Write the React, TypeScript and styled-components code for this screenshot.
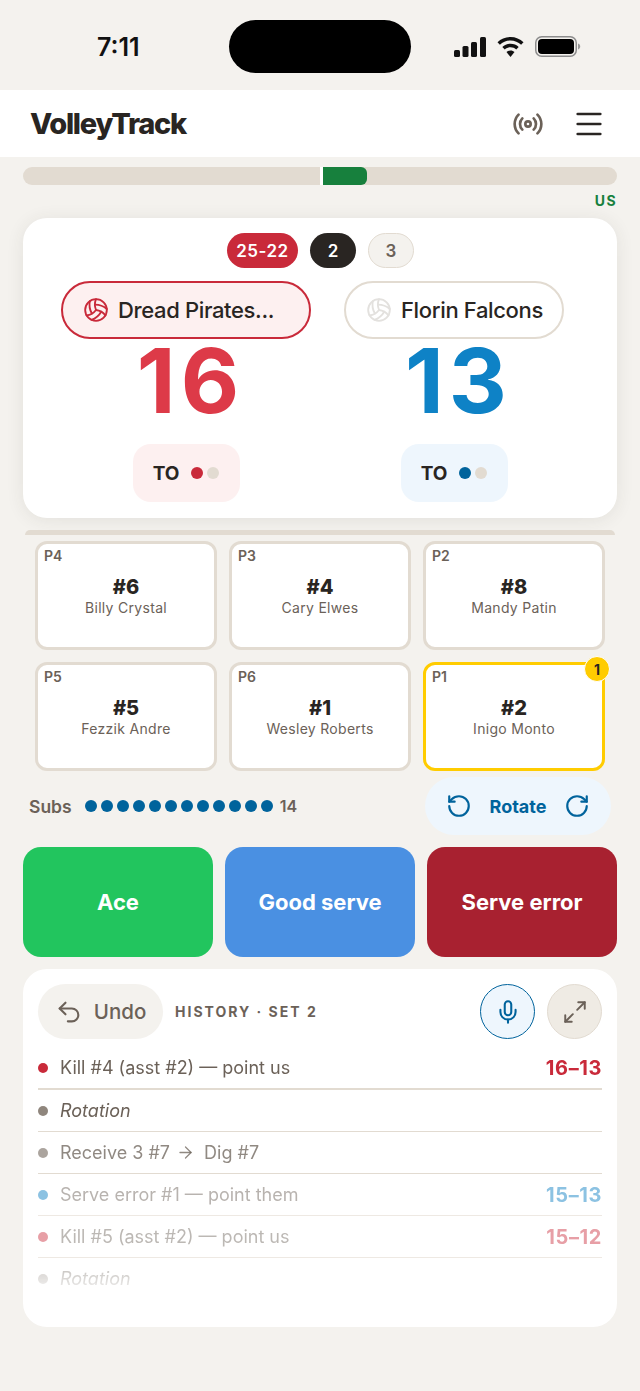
import React from 'react';
import { default as styled, createGlobalStyle } from 'styled-components';
import { Radio, Menu, Volleyball, RotateCcw, RotateCw, Undo2, Mic, Maximize2, ArrowRight } from 'lucide-react';

const colors = {
  page: '#f4f2ee',
  line: '#e2dbd1',
  ink: '#292522',
  muted: '#6b6158',
  red: '#c92a3a',
  redSoft: '#fdf0f0',
  blue: '#00639c',
  blueSoft: '#eef6fd',
  green: '#17803d',
};

const GlobalStyle = createGlobalStyle`
  html, body {
    margin: 0;
    padding: 0;
    background: ${colors.page};
  }
  body {
    font-family: Inter, "Liberation Sans", sans-serif;
    color: ${colors.ink};
  }
  * {
    box-sizing: border-box;
  }
`;

const Page = styled.div`
  width: 640px;
  height: 1391px;
  overflow: hidden;
  background: ${colors.page};
`;

const StatusBar = styled.div`
  height: 90px;
  display: flex;
  align-items: center;
  padding: 0 59px 0 97px;
`;

const Time = styled.div`
  width: 132px;
  font-size: 25px;
  font-weight: 600;
  color: #111;
  margin-top: 4px;
`;

const Island = styled.div`
  width: 182px;
  height: 53px;
  border-radius: 27px;
  background: #000;
  margin-top: 3px;
`;

const StatusIcons = styled.div`
  margin-left: 43px;
  display: flex;
  align-items: center;
  gap: 11px;
  margin-top: 3px;
`;

const Header = styled.header`
  height: 67px;
  background: #fff;
  display: flex;
  align-items: center;
  justify-content: space-between;
  padding: 0 34px 0 30px;
`;

const Logo = styled.div`
  font-size: 29px;
  font-weight: 800;
  letter-spacing: -1.25px;
  color: ${colors.ink};
`;

const HeaderActions = styled.div`
  display: flex;
  align-items: center;
  gap: 28px;
  color: ${colors.muted};
`;

const MenuButton = styled.div`
  display: flex;
  color: ${colors.ink};
`;

const Momentum = styled.div`
  margin: 10px 23px 0;
  height: 18px;
  border-radius: 9px;
  background: ${colors.line};
  display: flex;
  padding-left: 297px;
`;

const MomentumFill = styled.div`
  width: 47px;
  height: 18px;
  background: ${colors.green};
  border-left: 3px solid #fff;
  border-radius: 0 6px 6px 0;
`;

const MomentumLabel = styled.div`
  margin: 7px 23px 0 0;
  text-align: right;
  font-size: 14px;
  line-height: 17px;
  font-weight: 700;
  letter-spacing: 1.4px;
  color: ${colors.green};
`;

const ScoreCard = styled.section`
  margin: 9px 23px 0;
  height: 300px;
  background: #fff;
  border-radius: 24px;
  padding: 15px 29px 0;
  box-shadow: 0 2px 18px rgba(60, 50, 40, 0.09);
`;

const SetRow = styled.div`
  display: flex;
  justify-content: center;
  gap: 12px;
  padding-left: 1px;
`;

const SetPill = styled.div<{ $kind: 'won' | 'current' | 'next' }>`
  height: 35px;
  min-width: 46px;
  padding: 0 9.5px;
  border-radius: 18px;
  display: flex;
  align-items: center;
  justify-content: center;
  font-size: 17px;
  font-weight: 600;
  letter-spacing: 0.5px;
  color: ${(p) => (p.$kind === 'next' ? colors.muted : '#fff')};
  background: ${(p) =>
    p.$kind === 'won' ? colors.red : p.$kind === 'current' ? colors.ink : colors.page};
  border: ${(p) => (p.$kind === 'next' ? `1.5px solid ${colors.line}` : 'none')};
`;

const Teams = styled.div`
  margin-top: 13px;
  display: grid;
  grid-template-columns: 1fr 1fr;
`;

const TeamColumn = styled.div`
  display: flex;
  flex-direction: column;
  align-items: center;
`;

const TeamPill = styled.div<{ $serving?: boolean }>`
  width: ${(p) => (p.$serving ? '250px' : '220px')};
  height: 58px;
  border-radius: 29px;
  padding-left: 20px;
  display: flex;
  align-items: center;
  gap: 9px;
  font-size: 22px;
  font-weight: 500;
  letter-spacing: -0.35px;
  color: ${colors.ink};
  background: ${(p) => (p.$serving ? colors.redSoft : '#fff')};
  border: 2.5px solid ${(p) => (p.$serving ? colors.red : colors.line)};
`;

const Score = styled.div<{ $color: string }>`
  font-size: 90px;
  line-height: 84px;
  font-weight: 700;
  letter-spacing: 5px;
  text-indent: 9px;
  color: ${(p) => p.$color};
`;

const Timeouts = styled.div<{ $soft: string }>`
  margin-top: 21px;
  width: 107px;
  height: 58px;
  border-radius: 18px;
  background: ${(p) => p.$soft};
  display: flex;
  align-items: center;
  justify-content: center;
  gap: 4px;
  font-size: 19px;
  font-weight: 700;
  color: ${colors.ink};
`;

const TimeoutLabel = styled.span`
  margin-right: 8px;
`;

const TimeoutDot = styled.span<{ $color: string }>`
  width: 12px;
  height: 12px;
  border-radius: 50%;
  background: ${(p) => p.$color};
`;

const Court = styled.section`
  margin: 12px 25px 0;
  padding: 6px 10px 0;
  border-top: 5px solid ${colors.line};
  border-radius: 5px 5px 0 0;
  display: grid;
  grid-template-columns: repeat(3, 182px);
  grid-auto-rows: 109px;
  gap: 12px;
`;

const PlayerCard = styled.div<{ $server?: boolean }>`
  position: relative;
  background: #fff;
  border: 3px solid ${(p) => (p.$server ? '#ffcc00' : colors.line)};
  border-radius: 12px;
  padding: 3px 6px 0;
  display: flex;
  flex-direction: column;
`;

const Position = styled.div`
  font-size: 14px;
  line-height: 17px;
  font-weight: 600;
  color: ${colors.muted};
`;

const Jersey = styled.div`
  margin-top: 11px;
  text-align: center;
  font-size: 20px;
  line-height: 24px;
  font-weight: 800;
  color: ${colors.ink};
`;

const PlayerName = styled.div`
  text-align: center;
  font-size: 14px;
  line-height: 18px;
  letter-spacing: 0.3px;
  color: ${colors.muted};
`;

const ServeBadge = styled.div`
  position: absolute;
  top: -9px;
  right: -8px;
  width: 26px;
  height: 26px;
  border-radius: 50%;
  border: 1.5px solid #fff;
  background: #ffcc00;
  display: flex;
  align-items: center;
  justify-content: center;
  font-size: 14px;
  font-weight: 700;
  color: ${colors.ink};
`;

const SubsRow = styled.div`
  margin: 6px 29px 0;
  display: flex;
  align-items: center;
  height: 58px;
`;

const SubsLabel = styled.div`
  font-size: 17.5px;
  font-weight: 600;
  color: ${colors.muted};
  margin-right: 13px;
`;

const SubDots = styled.div`
  display: flex;
  gap: 4px;
`;

const SubDot = styled.span`
  width: 12px;
  height: 12px;
  border-radius: 50%;
  background: ${colors.blue};
`;

const SubCount = styled.div`
  margin-left: 7px;
  font-size: 16px;
  font-weight: 600;
  color: ${colors.muted};
`;

const RotatePill = styled.div`
  margin-left: auto;
  width: 186px;
  height: 58px;
  border-radius: 29px;
  background: ${colors.blueSoft};
  color: ${colors.blue};
  display: flex;
  align-items: center;
  justify-content: space-between;
  padding: 0 21px;
  font-size: 18px;
  font-weight: 700;
`;

const Actions = styled.div`
  margin: 12px 23px 0;
  display: grid;
  grid-template-columns: repeat(3, 190px);
  gap: 12px;
`;

const ActionButton = styled.div<{ $bg: string }>`
  height: 110px;
  border-radius: 18px;
  background: ${(p) => p.$bg};
  color: #fff;
  font-size: 22px;
  font-weight: 700;
  display: flex;
  align-items: center;
  justify-content: center;
`;

const HistoryCard = styled.section`
  margin: 12px 23px 0;
  height: 358px;
  background: #fff;
  border-radius: 24px;
  padding: 15px 15px 0;
`;

const HistoryTop = styled.div`
  display: flex;
  align-items: center;
`;

const UndoButton = styled.div`
  width: 125px;
  height: 55px;
  border-radius: 28px;
  background: ${colors.page};
  color: ${colors.muted};
  display: flex;
  align-items: center;
  justify-content: center;
  gap: 11px;
  font-size: 20.5px;
  font-weight: 500;
`;

const HistoryTitle = styled.div`
  margin-left: 12px;
  font-size: 14px;
  font-weight: 700;
  letter-spacing: 2px;
  color: ${colors.muted};
`;

const RoundButton = styled.div<{ $active?: boolean }>`
  width: 55px;
  height: 55px;
  border-radius: 50%;
  display: flex;
  align-items: center;
  justify-content: center;
  margin-left: 12px;
  color: ${(p) => (p.$active ? colors.blue : colors.muted)};
  background: ${(p) => (p.$active ? colors.blueSoft : '#efebe4')};
  border: 1.5px solid ${(p) => (p.$active ? colors.blue : colors.line)};
`;

const RoundButtons = styled.div`
  margin-left: auto;
  display: flex;
`;

const HistoryList = styled.div`
  margin-top: 8px;
  mask-image: linear-gradient(#000 215px, transparent 252px);
`;

const HistoryRow = styled.div<{ $fade: number; $strong?: boolean; $last?: boolean }>`
  height: ${(p) => (p.$strong ? '43px' : '42px')};
  display: flex;
  align-items: center;
  border-bottom: ${(p) => (p.$strong ? 2 : 1)}px solid
    rgba(226, 219, 209, ${(p) => (p.$last ? 0 : p.$fade < 0.6 ? 0.6 : 1)});
  font-size: 18px;
  color: rgba(107, 97, 88, ${(p) => p.$fade});
`;

const RowDot = styled.span<{ $color: string; $fade: number }>`
  width: 10px;
  height: 10px;
  border-radius: 50%;
  margin-right: 12px;
  background: ${(p) => p.$color};
  opacity: ${(p) => p.$fade};
`;

const RowText = styled.span<{ $italic?: boolean }>`
  font-style: ${(p) => (p.$italic ? 'italic' : 'normal')};
`;

const RowArrow = styled.span`
  display: flex;
  margin: 0 9px 0 6px;
`;

const RowScore = styled.span<{ $color: string; $fade: number }>`
  margin-left: auto;
  font-size: 20px;
  font-weight: 700;
  letter-spacing: 0.6px;
  color: ${(p) => p.$color};
  opacity: ${(p) => p.$fade};
`;

const SignalIcon = () => (
  <svg width="32" height="20" viewBox="0 0 32 20" fill="#111">
    <rect x="0" y="13" width="6" height="7" rx="1.5" />
    <rect x="8.5" y="9" width="6" height="11" rx="1.5" />
    <rect x="17" y="5" width="6" height="15" rx="1.5" />
    <rect x="26" y="0" width="6" height="20" rx="1.5" />
  </svg>
);

const WifiIcon = () => (
  <svg width="27" height="20" viewBox="0 0 27 20" fill="#111">
    <path d="M13.5 0C8.4 0 3.9 2 .5 5.2l2.4 2.6C5.7 5.2 9.4 3.6 13.5 3.6s7.8 1.6 10.6 4.2l2.4-2.6C23.1 2 18.6 0 13.5 0z" />
    <path d="M13.5 6.7c-3.2 0-6.1 1.2-8.2 3.2l2.5 2.6c1.5-1.4 3.5-2.2 5.7-2.2s4.2.8 5.7 2.2l2.5-2.6c-2.1-2-5-3.2-8.2-3.2z" />
    <path d="M13.5 13.4c-1.6 0-3 .6-4 1.6l4 5 4-5c-1-1-2.4-1.6-4-1.6z" />
  </svg>
);

const BatteryIcon = () => (
  <svg width="46" height="21" viewBox="0 0 46 21">
    <rect x="0.75" y="0.75" width="40.5" height="19.5" rx="6" fill="none" stroke="#8c8c8c" strokeWidth="1.5" />
    <rect x="3" y="3" width="36" height="15" rx="4" fill="#000" />
    <path d="M43 7.5c1.4.4 2.2 1.6 2.2 3s-.8 2.6-2.2 3z" fill="#9a9a9a" />
  </svg>
);

const players = [
  { pos: 'P4', num: '#6', name: 'Billy Crystal' },
  { pos: 'P3', num: '#4', name: 'Cary Elwes' },
  { pos: 'P2', num: '#8', name: 'Mandy Patin' },
  { pos: 'P5', num: '#5', name: 'Fezzik Andre' },
  { pos: 'P6', num: '#1', name: 'Wesley Roberts' },
  { pos: 'P1', num: '#2', name: 'Inigo Monto', server: true },
];

const history = [
  { text: 'Kill #4 (asst #2) — point us', dot: '#c92a3a', score: '16–13', scoreColor: '#c92a3a', fade: 1, strong: true },
  { text: 'Rotation', dot: '#8f867d', italic: true, fade: 1 },
  { text: 'Receive 3 #7', then: 'Dig #7', dot: '#8f867d', fade: 0.75 },
  { text: 'Serve error #1 — point them', dot: '#0f7fc2', score: '15–13', scoreColor: '#0f7fc2', fade: 0.48 },
  { text: 'Kill #5 (asst #2) — point us', dot: '#c92a3a', score: '15–12', scoreColor: '#c92a3a', fade: 0.45 },
  { text: 'Rotation', dot: '#8f867d', italic: true, fade: 0.45, last: true },
];

export default function App() {
  return (
    <Page>
      <GlobalStyle />
      <StatusBar>
        <Time>7:11</Time>
        <Island />
        <StatusIcons>
          <SignalIcon />
          <WifiIcon />
          <BatteryIcon />
        </StatusIcons>
      </StatusBar>
      <Header>
        <Logo>VolleyTrack</Logo>
        <HeaderActions>
          <Radio size={32} strokeWidth={2} />
          <MenuButton>
            <Menu size={34} strokeWidth={1.8} />
          </MenuButton>
        </HeaderActions>
      </Header>
      <Momentum>
        <MomentumFill />
      </Momentum>
      <MomentumLabel>US</MomentumLabel>
      <ScoreCard>
        <SetRow>
          <SetPill $kind="won">25-22</SetPill>
          <SetPill $kind="current">2</SetPill>
          <SetPill $kind="next">3</SetPill>
        </SetRow>
        <Teams>
          <TeamColumn>
            <TeamPill $serving>
              <Volleyball size={26} color={colors.red} strokeWidth={1.7} />
              Dread Pirates...
            </TeamPill>
            <Score $color="#dd3a48">16</Score>
            <Timeouts $soft={colors.redSoft}>
              <TimeoutLabel>TO</TimeoutLabel>
              <TimeoutDot $color={colors.red} />
              <TimeoutDot $color={colors.line} />
            </Timeouts>
          </TeamColumn>
          <TeamColumn>
            <TeamPill>
              <Volleyball size={26} color="#e3e1de" strokeWidth={1.7} />
              Florin Falcons
            </TeamPill>
            <Score $color="#0e82c6">13</Score>
            <Timeouts $soft={colors.blueSoft}>
              <TimeoutLabel>TO</TimeoutLabel>
              <TimeoutDot $color={colors.blue} />
              <TimeoutDot $color={colors.line} />
            </Timeouts>
          </TeamColumn>
        </Teams>
      </ScoreCard>
      <Court>
        {players.map((player) => (
          <PlayerCard key={player.pos} $server={player.server}>
            <Position>{player.pos}</Position>
            <Jersey>{player.num}</Jersey>
            <PlayerName>{player.name}</PlayerName>
            {player.server && <ServeBadge>1</ServeBadge>}
          </PlayerCard>
        ))}
      </Court>
      <SubsRow>
        <SubsLabel>Subs</SubsLabel>
        <SubDots>
          {Array.from({ length: 12 }, (_, i) => (
            <SubDot key={i} />
          ))}
        </SubDots>
        <SubCount>14</SubCount>
        <RotatePill>
          <RotateCcw size={26} strokeWidth={2} />
          Rotate
          <RotateCw size={26} strokeWidth={2} />
        </RotatePill>
      </SubsRow>
      <Actions>
        <ActionButton $bg="#22c55e">Ace</ActionButton>
        <ActionButton $bg="#4a90e2">Good serve</ActionButton>
        <ActionButton $bg="#a82130">Serve error</ActionButton>
      </Actions>
      <HistoryCard>
        <HistoryTop>
          <UndoButton>
            <Undo2 size={28} strokeWidth={1.8} />
            Undo
          </UndoButton>
          <HistoryTitle>HISTORY · SET 2</HistoryTitle>
          <RoundButtons>
            <RoundButton $active>
              <Mic size={26} strokeWidth={1.9} />
            </RoundButton>
            <RoundButton>
              <Maximize2 size={26} strokeWidth={1.8} />
            </RoundButton>
          </RoundButtons>
        </HistoryTop>
        <HistoryList>
          {history.map((row, i) => (
            <HistoryRow key={i} $fade={row.fade} $strong={row.strong} $last={row.last}>
              <RowDot $color={row.dot} $fade={row.fade} />
              <RowText $italic={row.italic}>{row.text}</RowText>
              {row.then && (
                <>
                  <RowArrow>
                    <ArrowRight size={19} strokeWidth={1.6} />
                  </RowArrow>
                  <RowText>{row.then}</RowText>
                </>
              )}
              {row.score && (
                <RowScore $color={row.scoreColor as string} $fade={row.fade}>
                  {row.score}
                </RowScore>
              )}
            </HistoryRow>
          ))}
        </HistoryList>
      </HistoryCard>
    </Page>
  );
}
